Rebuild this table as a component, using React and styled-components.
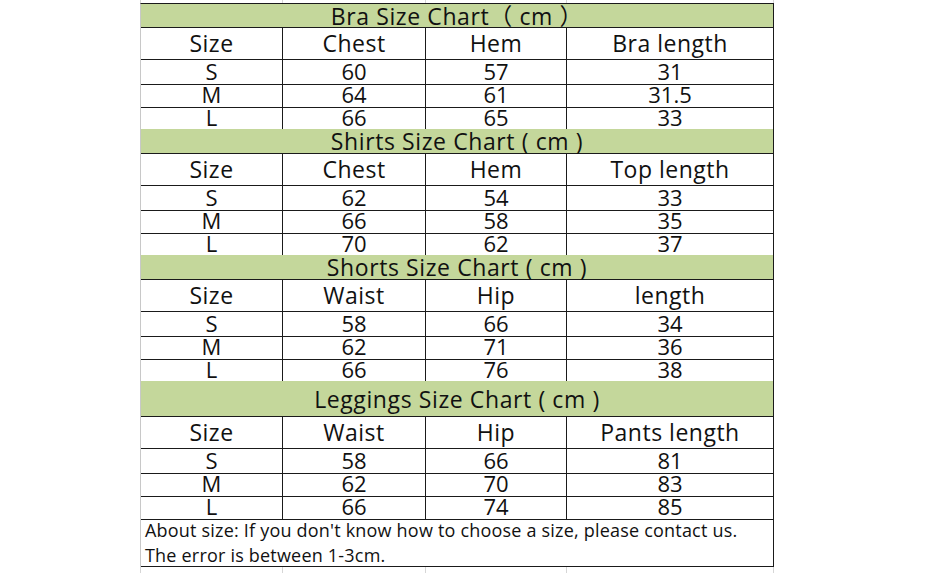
import React from 'react';
import styled, { createGlobalStyle } from 'styled-components';

const GlobalStyle = createGlobalStyle`
  html, body {
    margin: 0;
    padding: 0;
    background: #ffffff;
  }
  body {
    font-family: "Open Sans", "Noto Sans CJK SC", sans-serif;
    color: #111;
  }
`;

const COLS = '142px 143px 141px 207px';

const Page = styled.div`
  width: 940px;
  height: 573px;
  overflow: hidden;
  padding-left: 140px;
  box-sizing: border-box;
`;

const Sheet = styled.div`
  width: 634px;
  display: flex;
  flex-direction: column;
`;

const GridLines = styled.div`
  display: grid;
  grid-template-columns: ${COLS};
  height: ${(p) => p.h}px;
  border-left: 1px solid #d6d6d6;
  & > div {
    border-right: 1px solid #d6d6d6;
  }
`;

const Table = styled.div`
  display: flex;
  flex-direction: column;
  border-top: 1px solid #1a1a1a;
  border-left: 1px solid #c8c8c8;
`;

const Title = styled.div`
  height: ${(p) => p.h}px;
  box-sizing: border-box;
  background: #c4d79b;
  border-bottom: 1px solid #1a1a1a;
  border-right: 1px solid #1a1a1a;
  display: flex;
  align-items: center;
  justify-content: center;
  font-size: 23px;
  letter-spacing: 0.6px;
  line-height: 1;
  padding-top: 1px;
  white-space: pre;
`;

const Row = styled.div`
  display: grid;
  grid-template-columns: ${COLS};
  height: ${(p) => (p.head ? 32 : 23)}px;
`;

const Cell = styled.div`
  box-sizing: border-box;
  border-right: 1px solid #1a1a1a;
  border-bottom: 1px solid #1a1a1a;
  display: flex;
  align-items: center;
  justify-content: center;
  font-size: ${(p) => (p.head ? 23 : 22)}px;
  letter-spacing: ${(p) => (p.head ? 0.5 : 0)}px;
  line-height: 1;
  padding-bottom: ${(p) => (p.head ? 1 : 2)}px;
  white-space: nowrap;
`;

const Note = styled.div`
  height: 49px;
  box-sizing: border-box;
  border-right: 1px solid #1a1a1a;
  border-bottom: 1px solid #1a1a1a;
  padding: 0 0 0 4px;
  font-size: 18px;
  letter-spacing: 0.2px;
  line-height: 25px;
`;

const charts = [
  {
    title: 'Bra Size Chart（ cm ）',
    h: 24,
    head: ['Size', 'Chest', 'Hem', 'Bra length'],
    rows: [
      ['S', '60', '57', '31'],
      ['M', '64', '61', '31.5'],
      ['L', '66', '65', '33'],
    ],
  },
  {
    title: 'Shirts Size Chart ( cm )',
    h: 25,
    head: ['Size', 'Chest', 'Hem', 'Top length'],
    rows: [
      ['S', '62', '54', '33'],
      ['M', '66', '58', '35'],
      ['L', '70', '62', '37'],
    ],
  },
  {
    title: 'Shorts Size Chart ( cm )',
    h: 25,
    head: ['Size', 'Waist', 'Hip', 'length'],
    rows: [
      ['S', '58', '66', '34'],
      ['M', '62', '71', '36'],
      ['L', '66', '76', '38'],
    ],
  },
  {
    title: 'Leggings Size Chart ( cm )',
    h: 36,
    head: ['Size', 'Waist', 'Hip', 'Pants length'],
    rows: [
      ['S', '58', '66', '81'],
      ['M', '62', '70', '83'],
      ['L', '66', '74', '85'],
    ],
  },
];

function Chart({ chart }) {
  return (
    <>
      <Title h={chart.h}>{chart.title}</Title>
      <Row head>
        {chart.head.map((t) => (
          <Cell head key={t}>{t}</Cell>
        ))}
      </Row>
      {chart.rows.map((r) => (
        <Row key={r[0]}>
          {r.map((v, i) => (
            <Cell key={i}>{v}</Cell>
          ))}
        </Row>
      ))}
    </>
  );
}

export default function App() {
  return (
    <Page>
      <GlobalStyle />
      <Sheet>
        <GridLines h={3}>
          <div /><div /><div /><div />
        </GridLines>
        <Table>
          {charts.map((c) => (
            <Chart chart={c} key={c.title} />
          ))}
          <Note>
            About size: If you don't know how to choose a size, please contact us.
            <br />
            The error is between 1-3cm.
          </Note>
        </Table>
        <GridLines h={10}>
          <div /><div /><div /><div />
        </GridLines>
      </Sheet>
    </Page>
  );
}
